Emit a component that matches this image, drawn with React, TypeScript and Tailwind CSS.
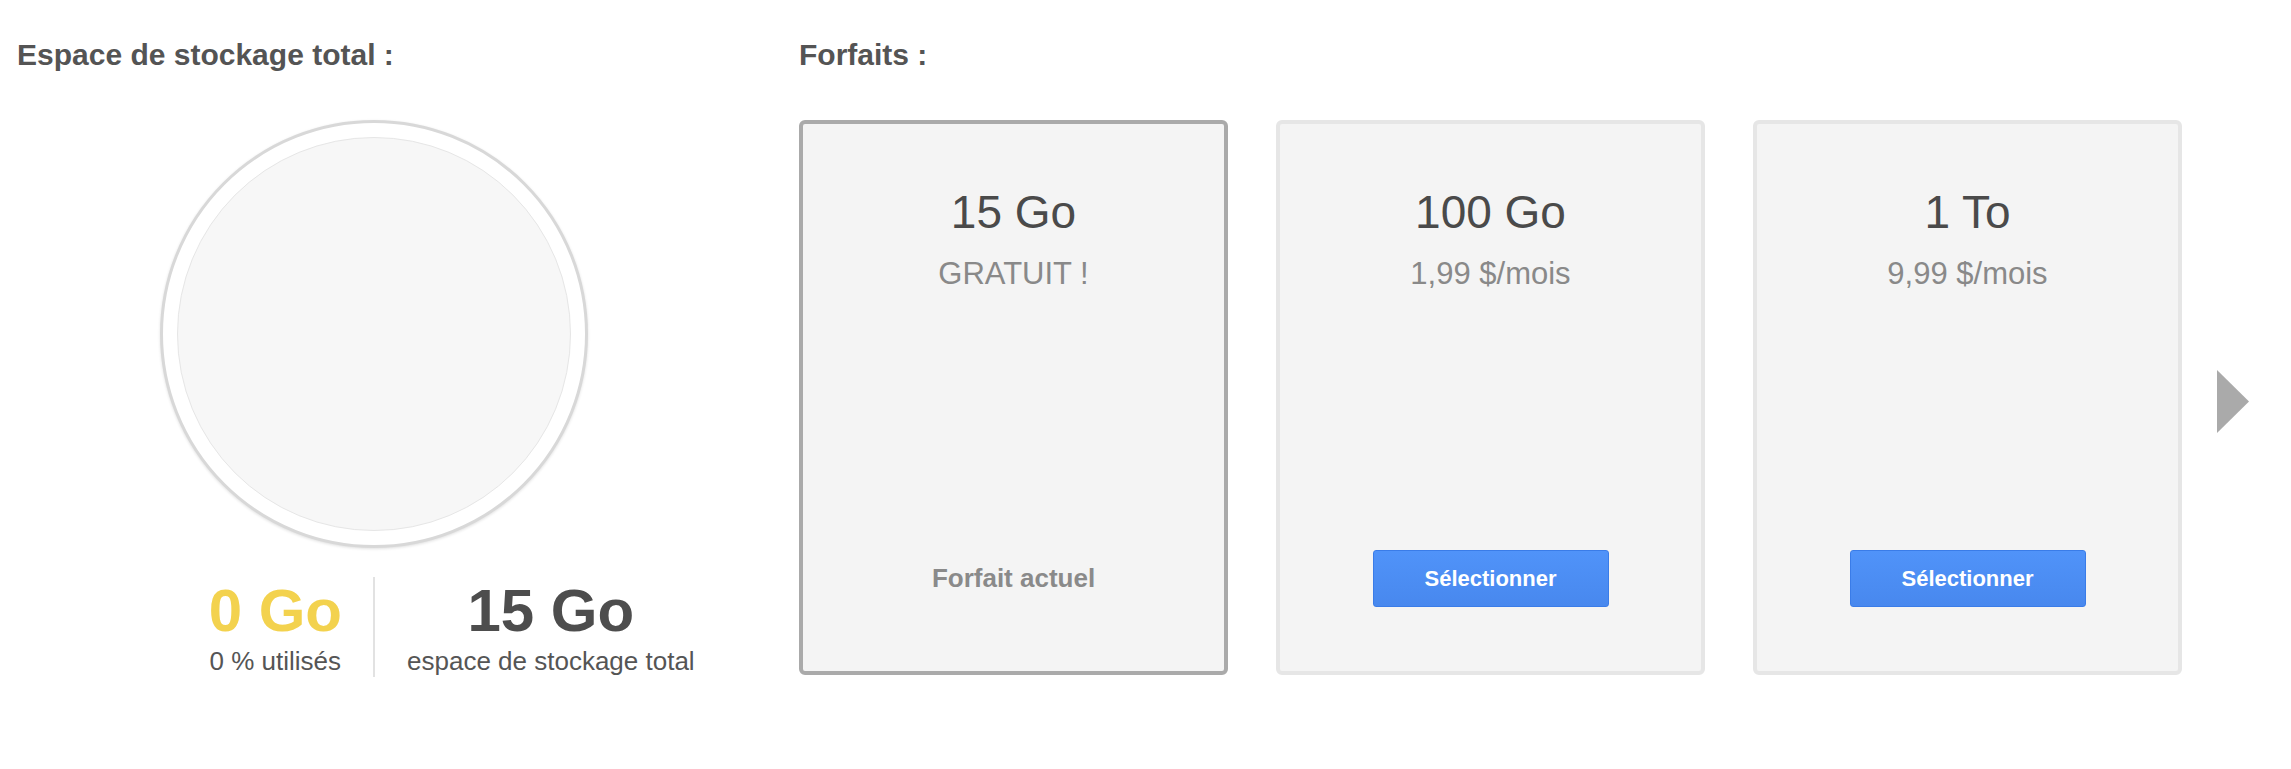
import React from "react";

const font = { fontFamily: '"Liberation Sans", Arial, Helvetica, sans-serif' };

type Plan = { size: string; price: string; current?: boolean };

const plans: Plan[] = [
  { size: "15 Go", price: "GRATUIT !", current: true },
  { size: "100 Go", price: "1,99 $/mois" },
  { size: "1 To", price: "9,99 $/mois" },
];

function PlanCard({ plan }: { plan: Plan }) {
  return (
    <div
      className={
        "flex h-[555px] w-[429px] flex-col items-center rounded-[6px] border-4 bg-[#f4f4f4] " +
        (plan.current ? "border-[#aaaaaa]" : "border-[#e6e6e6]")
      }
    >
      <div className="pt-[62px] text-[46px] leading-[52px] text-[#4a4a4a]">{plan.size}</div>
      <div className="mt-[18px] text-[31px] leading-[36px] text-[#898989]">{plan.price}</div>
      <div className="mt-auto mb-[64px] flex h-[57px] items-center justify-center">
        {plan.current ? (
          <span className="text-[26px] font-bold text-[#8a8a8a]">Forfait actuel</span>
        ) : (
          <button className="h-[57px] w-[236px] rounded-[3px] border border-[#3a7ce8] bg-gradient-to-b from-[#5093f9] to-[#4888ee] text-[22px] font-bold text-white">
            Sélectionner
          </button>
        )}
      </div>
    </div>
  );
}

export default function App() {
  return (
    <div className="flex min-h-[769px] w-[2291px] bg-white pl-[17px] pt-[38px]" style={font}>
      <div className="flex w-[714px] flex-col">
        <h2 className="text-[30px] font-bold leading-[34px] text-[#545454]">Espace de stockage total :</h2>
        <div className="mx-auto mt-[48px] flex h-[428px] w-[428px] items-center justify-center rounded-full border-[3px] border-[#d8d8d8] bg-white shadow-[0_1px_3px_rgba(0,0,0,0.12)]">
          <div className="h-[394px] w-[394px] rounded-full border border-[#e6e6e6] bg-[#f7f7f7]" />
        </div>
        <div className="mt-[29px] grid grid-cols-[1fr_2px_1fr]">
          <div className="flex justify-end pr-[31px] pt-[4px]">
            <div className="flex flex-col items-center">
              <div className="text-[60px] font-bold leading-[60px] text-[#f3d24e]">0 Go</div>
              <div className="mt-[5px] text-[26px] leading-[30px] text-[#555555]">0 % utilisés</div>
            </div>
          </div>
          <div className="h-[100px] w-[2px] bg-[#e2e2e2]" />
          <div className="flex justify-start pl-[32px] pt-[4px]">
            <div className="flex flex-col items-center">
              <div className="text-[60px] font-bold leading-[60px] text-[#4d4d4d]">15 Go</div>
              <div className="mt-[5px] text-[26px] leading-[30px] text-[#555555]">espace de stockage total</div>
            </div>
          </div>
        </div>
      </div>
      <div className="ml-[68px] flex flex-col">
        <h2 className="text-[30px] font-bold leading-[34px] text-[#545454]">Forfaits :</h2>
        <div className="mt-[48px] flex items-center">
          <div className="flex gap-[48px]">
            {plans.map((p) => (
              <PlanCard key={p.size} plan={p} />
            ))}
          </div>
          <svg className="ml-[35px] mt-[8px]" width="32" height="63" viewBox="0 0 32 63">
            <polygon points="0,0 32,31.5 0,63" fill="#aaaaaa" />
          </svg>
        </div>
      </div>
    </div>
  );
}
